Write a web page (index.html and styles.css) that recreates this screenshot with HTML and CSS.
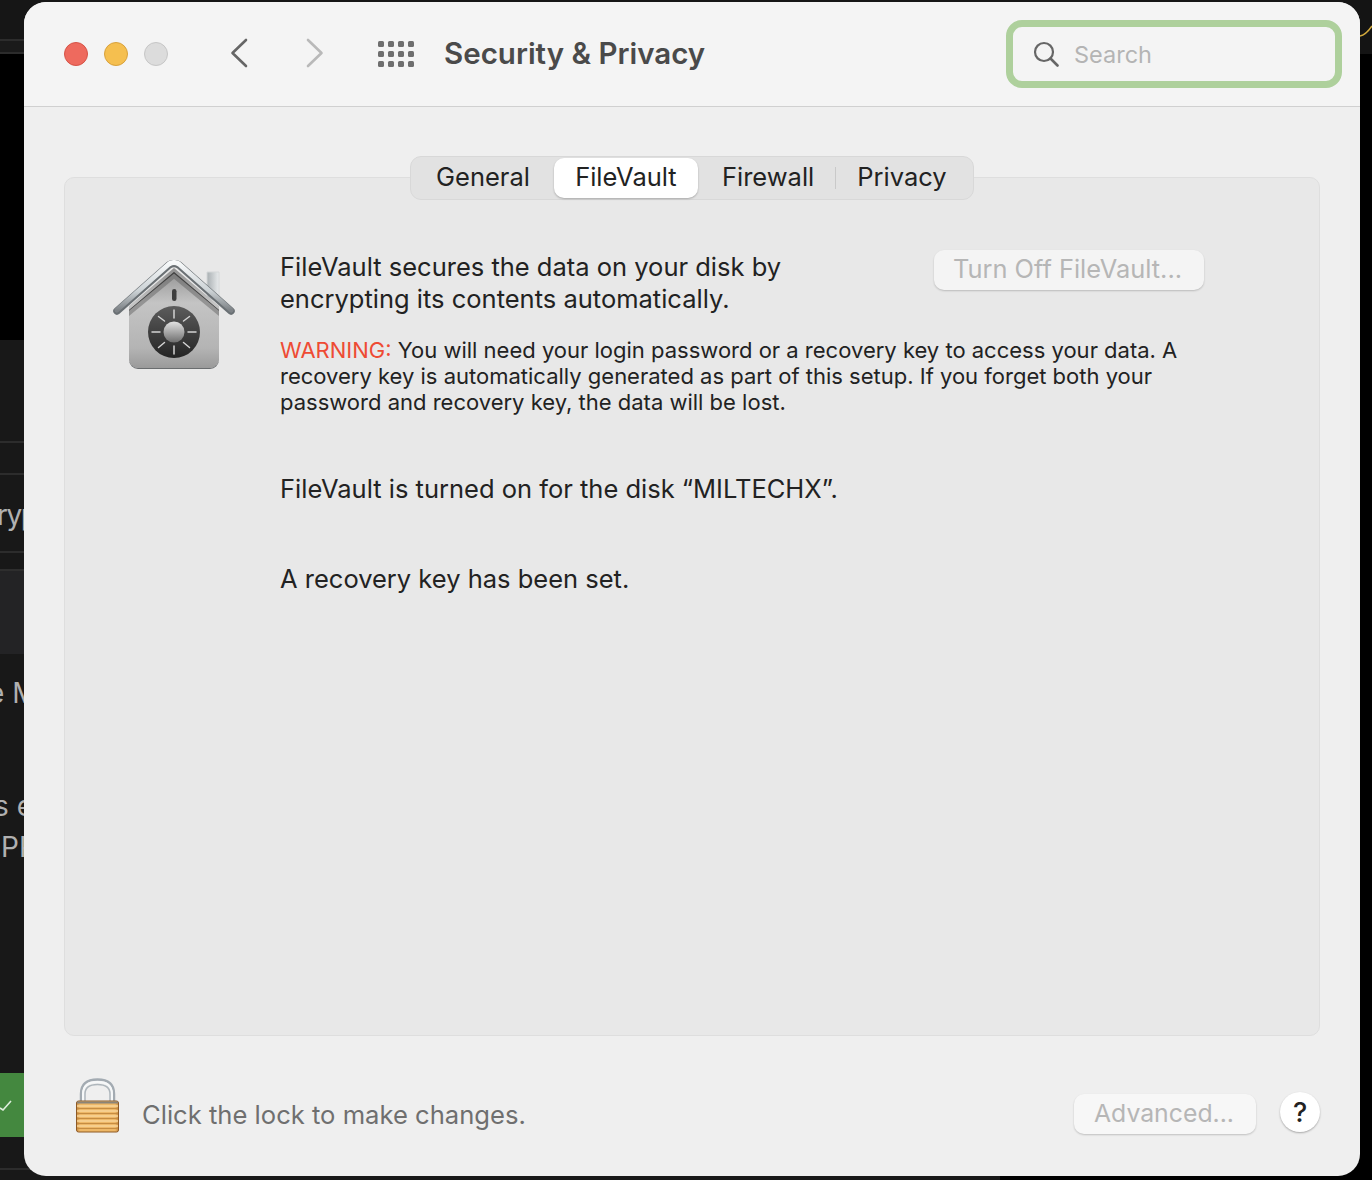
FILE: index.html
```html
<!DOCTYPE html>
<html lang="en">
<head>
<meta charset="utf-8">
<title>Security &amp; Privacy</title>
<link rel="stylesheet" href="styles.css">
</head>
<body>
<div class="desktop">
  <div class="bg-panel p1"></div>
  <div class="bg-panel p1b"></div>
  <div class="bg-panel p0"></div>
  <div class="bg-panel pr"></div>
  <div class="bg-line l1"></div>
  <div class="bg-line l2"></div>
  <div class="bg-line l3"></div>
  <div class="bg-line l4"></div>
  <div class="bg-line l5"></div>
  <div class="bg-line l6"></div>
  <div class="bg-panel p2"></div>
  <div class="bg-text t1">ryp</div>
  <div class="bg-text t2">e M</div>
  <div class="bg-text t3">s e</div>
  <div class="bg-text t4">PP</div>
  <div class="bg-green"><svg width="14" height="12" viewBox="0 0 14 12"><path d="M0 9l3 2 8-9" fill="none" stroke="#dfeedd" stroke-width="1.6"/></svg></div>
  <svg class="bg-curve" width="12" height="14" viewBox="0 0 12 14"><path d="M0 12Q6 11 12 2" fill="none" stroke="#d2a93c" stroke-width="1.5"/></svg>

  <main class="window">
    <header class="toolbar">
      <div class="lights">
        <span class="light red"></span>
        <span class="light yellow"></span>
        <span class="light grey"></span>
      </div>
      <svg class="nav back" width="20" height="30" viewBox="0 0 20 30"><path d="M17 2 3.500 15 17 28" fill="none" stroke="#666" stroke-width="2.600" stroke-linecap="round" stroke-linejoin="round"/></svg>
      <svg class="nav forward" width="20" height="30" viewBox="0 0 20 30"><path d="M3 2 16.500 15 3 28" fill="none" stroke="#b9b9b9" stroke-width="2.600" stroke-linecap="round" stroke-linejoin="round"/></svg>
      <svg class="grid" width="36" height="26" viewBox="0 0 36 26" fill="#6e6e6e">
        <rect x="0" y="0" width="6" height="6" rx="1.500"/><rect x="10" y="0" width="6" height="6" rx="1.500"/><rect x="20" y="0" width="6" height="6" rx="1.500"/><rect x="30" y="0" width="6" height="6" rx="1.500"/>
        <rect x="0" y="10" width="6" height="6" rx="1.500"/><rect x="10" y="10" width="6" height="6" rx="1.500"/><rect x="20" y="10" width="6" height="6" rx="1.500"/><rect x="30" y="10" width="6" height="6" rx="1.500"/>
        <rect x="0" y="20" width="6" height="6" rx="1.500"/><rect x="10" y="20" width="6" height="6" rx="1.500"/><rect x="20" y="20" width="6" height="6" rx="1.500"/><rect x="30" y="20" width="6" height="6" rx="1.500"/>
      </svg>
      <h1 class="title">Security &amp; Privacy</h1>
      <div class="search">
        <svg width="26" height="26" viewBox="0 0 26 26"><circle cx="11" cy="11" r="9" fill="none" stroke="#666" stroke-width="2.200"/><path d="M17.500 17.500 24.500 24.500" stroke="#666" stroke-width="2.600" stroke-linecap="round"/></svg>
        <span class="search-text">Search</span>
      </div>
    </header>

    <div class="content">
      <section class="tabbox">
        <nav class="tabs">
          <span class="tab t-general">General</span>
          <span class="tab active">FileVault</span>
          <span class="tab t-firewall">Firewall</span>
          <span class="tab-sep"></span>
          <span class="tab t-privacy">Privacy</span>
        </nav>
        <div class="pane">
          <svg class="house" width="126" height="112" viewBox="0 0 126 112">
            <defs>
              <linearGradient id="body" x1="0" y1="0" x2="0" y2="1"><stop offset="0" stop-color="#8f8f8f"/><stop offset=".35" stop-color="#c4c4c4"/><stop offset=".8" stop-color="#b4b4b4"/><stop offset="1" stop-color="#9a9a9a"/></linearGradient>
              <linearGradient id="roof" x1="0" y1="0" x2="0" y2="1"><stop offset="0" stop-color="#f7f9fa"/><stop offset=".6" stop-color="#ccd2d5"/><stop offset="1" stop-color="#7d8286"/></linearGradient>
              <linearGradient id="dial" x1="0" y1="0" x2="0" y2="1"><stop offset="0" stop-color="#5c5c5c"/><stop offset="1" stop-color="#242424"/></linearGradient>
              <linearGradient id="knob" x1="0" y1="0" x2="0" y2="1"><stop offset="0" stop-color="#e2e2e2"/><stop offset="1" stop-color="#6e6e6e"/></linearGradient>
              <linearGradient id="chim" x1="0" y1="0" x2="1" y2="0"><stop offset="0" stop-color="#a9afb2"/><stop offset="1" stop-color="#e8ebec"/></linearGradient>
              <clipPath id="bodyclip"><path d="M17 50 62 12l45 38v49a9 9 0 0 1-9 9H26a9 9 0 0 1-9-9z"/></clipPath>
            </defs>
            <path d="M95 12h12v28H95z" fill="url(#chim)" stroke="#d4d7d8" stroke-width="1"/>
            <path d="M17 46 62 8l45 38v53a9 9 0 0 1-9 9H26a9 9 0 0 1-9-9z" fill="url(#body)"/>
            <path d="M17 99v1a9 9 0 0 0 9 9h72a9 9 0 0 0 9-9v-1a9 9 0 0 1-9 9H26a9 9 0 0 1-9-9z" fill="#6a6d6f"/>
            <g clip-path="url(#bodyclip)"><path d="M10 52 62 9l52 43" fill="none" stroke="#1a1a1a" stroke-width="7" opacity=".85"/><path d="M10 58 62 15l52 43" fill="none" stroke="#5a5a5a" stroke-width="6" opacity=".45"/></g>
            <path d="M5 51 57 5q5-3 10 0l52 46" fill="none" stroke="#6a7074" stroke-width="7.500" stroke-linecap="round" stroke-linejoin="round"/>
            <path d="M5 50 57 4q5-3 10 0l52 46" fill="none" stroke="url(#roof)" stroke-width="5" stroke-linecap="round" stroke-linejoin="round"/>
            <rect x="60" y="29" width="4.500" height="12" rx="2.250" fill="#3d3d3d"/>
            <circle cx="62" cy="72" r="26" fill="url(#dial)"/>
            <g stroke="#d2d2d2" stroke-width="1.500" stroke-linecap="round">
              <path d="M62 50v8M62 86v8M40 72h8M76 72h8M46.500 56.500l6 4.500M77.500 56.500l-6 4.500M46.500 87.500l6-5M77.500 87.500l-6-5"/>
            </g>
            <circle cx="62" cy="72" r="10.500" fill="url(#knob)"/>
          </svg>
          <div class="info">
            <div class="intro-row">
              <p class="lead">FileVault secures the data on your disk by encrypting its contents automatically.</p>
              <button class="btn btn-off" type="button">Turn Off FileVault...</button>
            </div>
            <p class="warning"><span class="warn-word">WARNING:</span> You will need your login password or a recovery key to access your data. A recovery key is automatically generated as part of this setup. If you forget both your password and recovery key, the data will be lost.</p>
            <p class="status s1">FileVault is turned on for the disk “MILTECHX”.</p>
            <p class="status s2">A recovery key has been set.</p>
          </div>
        </div>
      </section>

      <footer class="footer">
        <svg class="lock" width="46" height="56" viewBox="0 0 46 56">
          <defs>
            <linearGradient id="lockbody" x1="0" y1="0" x2="1" y2="0"><stop offset="0" stop-color="#c58a42"/><stop offset=".08" stop-color="#edb767"/><stop offset=".92" stop-color="#edb767"/><stop offset="1" stop-color="#c58a42"/></linearGradient>
          </defs>
          <path d="M6 23V16Q6 1.500 22.500 1.500T39 16v7" fill="none" stroke="#a3abb2" stroke-width="2.500"/>
          <path d="M8 23V16Q8 4 22.500 4T37 16v7" fill="none" stroke="#f6f8f9" stroke-width="2"/>
          <path d="M10 23V16Q10 6.500 22.500 6.500T35 16v7" fill="none" stroke="#aeb6bc" stroke-width="1.500"/>
          <rect x="1.500" y="23" width="42" height="31" rx="2" fill="url(#lockbody)" stroke="#8f5a25" stroke-width="1"/>
          <rect x="2" y="23.500" width="41" height="2" fill="#8b8478"/>
          <g stroke="#f9d69a" stroke-width="1.500"><path d="M2 28h41M2 33h41M2 38h41M2 43h41M2 48h41"/></g>
          <g stroke="#c68c42" stroke-width="1"><path d="M2 30.500h41M2 35.500h41M2 40.500h41M2 45.500h41M2 50.500h41"/></g>
        </svg>
        <span class="lock-text">Click the lock to make changes.</span>
        <button class="btn btn-adv" type="button">Advanced...</button>
        <button class="help" type="button">?</button>
      </footer>
    </div>
  </main>
</div>
</body>
</html>
```

FILE: styles.css
```css
* { box-sizing: border-box; }
html, body { margin: 0; padding: 0; }
body { width: 1372px; height: 1180px; overflow: hidden; background: #000; font-family: Inter, "Liberation Sans", sans-serif; }

.desktop { position: relative; width: 1372px; height: 1180px; background: #000; overflow: hidden; }
.bg-line { position: absolute; left: 0; width: 30px; height: 2px; background: #2c2c2c; }
.l1 { top: 39px; }
.l2 { top: 52px; }
.l3 { top: 441px; }
.l4 { top: 473px; }
.l5 { top: 551px; }
.l6 { top: 1168px; width: 600px; }
.bg-panel { position: absolute; left: 0; width: 30px; }
.p1 { top: 0; height: 39px; width: 1372px; background: #161616; }
.p1b { top: 39px; height: 14px; background: #1a1a1a; }
.p0 { top: 340px; height: 840px; width: 1000px; background: #181818; }
.pr { top: 0; left: 1360px; width: 12px; height: 54px; background: #141414; }
.p2 { top: 569px; height: 85px; background: #232325; border-top: 2px solid #2e2e2e; }
.bg-text { position: absolute; color: #b0b0b0; font-size: 28px; line-height: 34px; white-space: nowrap; }
.t1 { left: -3px; top: 498px; letter-spacing: -1.500px; }
.t2 { left: -12px; top: 676px; }
.t3 { left: -6px; top: 789px; }
.t4 { left: 1px; top: 830px; }
.bg-green { position: absolute; left: 0; top: 1073px; width: 30px; height: 64px; background: #44883f; padding: 26px 0 0 0; }
.bg-green svg { display: block; }
.bg-curve { position: absolute; left: 1360px; top: 24px; }

.window { position: absolute; left: 24px; top: 2px; width: 1336px; height: 1174px; border-radius: 22px; background: #efefef; overflow: hidden; display: flex; flex-direction: column; }

.toolbar { height: 105px; flex: none; background: #f4f4f4; border-bottom: 1px solid #d0d0d0; display: flex; align-items: center; padding-left: 40px; }
.lights { display: flex; gap: 16px; }
.light { width: 24px; height: 24px; border-radius: 50%; display: block; }
.red { background: #ee6a5e; border: 1px solid #d65347; }
.yellow { background: #f5bf4f; border: 1px solid #d8a13c; }
.grey { background: #dcdcdc; border: 1px solid #c6c6c6; }
.nav { flex: none; margin-top: -2px; }
.back { margin-left: 61px; }
.forward { margin-left: 56px; }
.grid { margin-left: 53px; margin-top: -1px; flex: none; }
.title { margin: -2px 0 0 30px; font-size: 29.500px; font-weight: 600; color: #4a4a4a; white-space: nowrap; }
.search { margin-left: auto; margin-right: 18px; margin-top: -1px; width: 336px; height: 68px; border: 7px solid #aed09c; border-radius: 16px; display: flex; align-items: center; padding-left: 20px; gap: 15px; }
.search svg { flex: none; }
.search-text { font-size: 23.500px; color: #b4b4b4; margin-top: 2px; }

.content { flex: 1; display: flex; flex-direction: column; padding: 0 40px; }

.tabbox { position: relative; margin-top: 70px; height: 859px; background: #e8e8e8; border: 1px solid #dedede; border-radius: 10px; }
.tabs { position: absolute; left: 345px; top: -22px; width: 564px; height: 44px; background: #e2e2e2; border: 1px solid #d8d8d8; border-radius: 11px; display: flex; align-items: center; padding: 0 2px; font-size: 25.500px; color: #222; }
.tab { display: block; white-space: nowrap; height: 40px; line-height: 38px; }
.t-general { margin-left: 23px; }
.active { margin-left: 24px; width: 144px; text-align: center; background: #fff; border-radius: 10px; box-shadow: 0 1px 2px rgba(0,0,0,.25); }
.t-firewall { margin-left: 24px; }
.tab-sep { width: 1px; height: 22px; background: #c9c9c9; margin-left: 21px; }
.t-privacy { margin-left: 21px; }

.pane { display: flex; padding: 82px 0 0 47px; }
.house { flex: none; }
.info { margin-left: 42px; width: 931px; margin-top: -9px; color: #222; }
.intro-row { display: flex; align-items: flex-start; }
.lead { margin: 0; width: 654px; padding-right: 120px; font-size: 25.500px; line-height: 32px; }
.btn { font-family: inherit; border: 0; background: #f4f4f4; color: #b6b6b6; border-radius: 10px; box-shadow: 0 1px 2px rgba(0,0,0,.2); font-size: 25.400px; padding: 0; white-space: nowrap; }
.btn-off { width: 270px; height: 40px; margin-top: -1px; padding-bottom: 4px; padding-right: 3px; flex: none; }
.warning { margin: 22px 0 0; font-size: 22px; line-height: 26px; width: 905px; }
.warn-word { color: #ee4b34; }
.status { margin: 0; font-size: 25.500px; line-height: 32px; white-space: nowrap; }
.s1 { margin-top: 58px; }
.s2 { margin-top: 58px; }

.footer { flex: 1; display: flex; align-items: center; position: relative; }
.lock { flex: none; margin-left: 11px; }
.lock-text { margin-left: 21px; margin-top: 16px; font-size: 25.600px; color: #6f6f6f; white-space: nowrap; }
.btn-adv { margin-left: auto; margin-top: 16px; width: 182px; height: 40px; padding-bottom: 2px; padding-right: 2px; background: #f7f7f7; font-size: 24.800px; }
.help { margin-left: 24px; margin-top: 12px; width: 40px; height: 40px; border-radius: 50%; border: 0; background: #fff; box-shadow: 0 1px 2px rgba(0,0,0,.3); font-family: inherit; font-size: 27px; font-weight: 500; color: #222; padding: 0; }
```
